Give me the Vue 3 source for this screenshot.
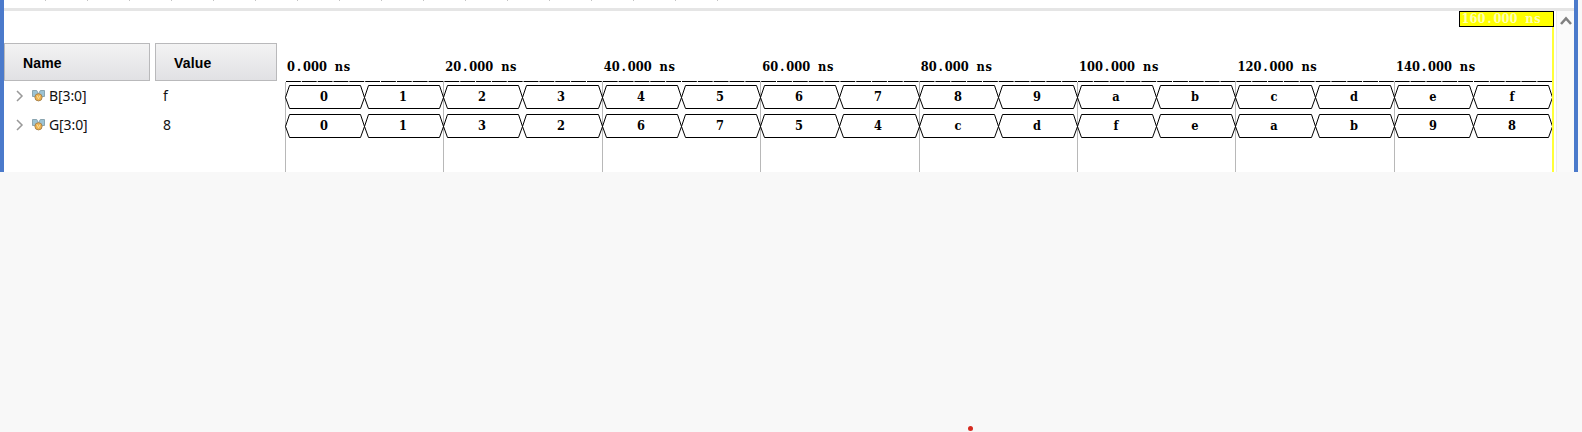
<script setup>
const START = 285.3
const STEP = 79.22
const END = 1552
const ticks = Array.from({ length: 17 }, (_, i) => 45 + i * 42)
const labels = Array.from({ length: 8 }, (_, i) => ({
  text: `${i * 20}.000 ns`,
  x: START + i * 2 * STEP + 1.7,
  line: Math.floor(START + i * 2 * STEP),
}))
const signals = [
  { name: 'B[3:0]', value: 'f', y: 85, cells: [...'0123456789abcdef'] },
  { name: 'G[3:0]', value: '8', y: 114, cells: [...'01326754cdfeab98'] },
]
const at = (i) => Math.floor(START + i * STEP) + 0.5
// one fixed-width column of 8px per character
const columns = (text, x) => [...text].map((_, i) => (x + 3.9 + i * 8).toFixed(2)).join(' ')
function hexagon(i, y) {
  const a = at(i)
  const b = at(i + 1)
  const t = y + 0.5
  return `M${a} ${t + 12}L${a + 4} ${t}H${b - 4}L${b} ${t + 12}L${b - 4} ${t + 23}H${a + 4}Z`
}
</script>

<template>
  <div class="page">
    <main class="window">
      <section class="signals">
        <div class="heads">
          <div class="head name">Name</div>
          <div class="head value">Value</div>
        </div>
        <div v-for="s in signals" :key="s.name" class="row">
          <svg class="chevron" width="8" height="12" viewBox="0 0 8 12"><path d="M1 1L6 6L1 11" /></svg>
          <svg class="bus" width="13" height="12" viewBox="0 0 13 12">
            <path d="M.5 .5H4.7L6.5 4V6.5H.5Z" fill="#9cc3d3" stroke="#8aa5b0" />
            <path d="M12.5 .5H8.3L6.5 4V6.5H12.5Z" fill="#9cc3d3" stroke="#8aa5b0" />
            <circle cx="6.5" cy="7.3" r="3.6" fill="#efb44e" stroke="#a98450" />
            <path d="M5 5.5L6.5 8.7L8 5.5" fill="none" stroke="#f8dc9d" />
          </svg>
          <span class="label">{{ s.name }}</span>
          <span class="val">{{ s.value }}</span>
        </div>
      </section>
      <svg class="wave" width="1582" height="172" viewBox="0 0 1582 172">
        <rect x="4" y="8" width="1570" height="3" fill="#e5e5e5" />
        <rect v-for="t in ticks" :key="t" :x="t" y="0" width="1" height="1" fill="#c4c4c4" />
        <rect v-for="l in labels" :key="l.line" :x="l.line" y="82" width="1" height="90" fill="#b8b8b8" />
        <text v-for="l in labels" :key="l.text" :x="columns(l.text, l.x)" y="71" class="mono">{{ l.text }}</text>
        <line :x1="START + 0.7" :x2="END" y1="81.5" y2="81.5" stroke="#000" stroke-dasharray="14.84 1" />
        <g v-for="s in signals" :key="s.name">
          <path v-for="(c, i) in s.cells" :key="i" :d="hexagon(i, s.y)" class="cell" />
          <text v-for="(c, i) in s.cells" :key="c" :x="at(i) + 38.5" :y="s.y + 16" class="mono">{{ c }}</text>
        </g>
        <rect x="1552" y="11" width="2" height="161" fill="#ffff38" />
        <rect x="1459.5" y="11.5" width="94" height="15" fill="#ff0" stroke="#000" />
        <text :x="columns('160.000 ns', 1461.5)" y="23" class="mono cursor">160.000 ns</text>
        <rect x="1556" y="11" width="18" height="161" fill="#fafafa" />
        <rect x="1556" y="11" width="1" height="161" fill="#ececec" />
        <path d="M1561 24L1566 18.5L1571 24" fill="none" stroke="#808080" stroke-width="2.6" />
      </svg>
    </main>
    <i class="dot"></i>
  </div>
</template>

<style>
body { margin: 0; background: #f8f8f8; }
</style>

<style scoped>
.page { position: relative; width: 1582px; height: 432px; overflow: hidden; background: #f8f8f8; }
.window { position: relative; box-sizing: border-box; width: 1578px; height: 172px; background: #fff; border: solid #4b7acb; border-width: 0 4px; padding-top: 43px; }
.wave { position: absolute; left: -4px; top: 0; }
.signals { width: 273px; }
.heads { display: flex; gap: 5px; }
.head { box-sizing: border-box; height: 38px; border: 1px solid #b9b9bb; background: linear-gradient(#f3f3f3, #e1e1e4); font: bold 14px/38px "Liberation Sans", Arial, sans-serif; color: #000; padding-left: 18px; letter-spacing: .15px; }
.name { width: 146px; }
.value { width: 122px; }
.row { display: flex; align-items: center; height: 29px; font: 14px/29px "Noto Sans", sans-serif; color: #111; }
.chevron { margin: 0 8px 0 12px; fill: none; stroke: #999; stroke-width: 1.5; }
.bus { margin-right: 4px; }
.label { width: 114px; letter-spacing: -.1px; }
.mono { font: bold 12.7px "DejaVu Serif Condensed", "DejaVu Serif", serif; font-stretch: condensed; fill: #000; white-space: pre; text-anchor: middle; }
.cursor { fill: #ffffb4; }
.cell { fill: none; stroke: #000; stroke-width: 1; }
.dot { position: absolute; left: 968px; top: 426px; width: 5px; height: 5px; border-radius: 50%; background: #d52b20; }
</style>
